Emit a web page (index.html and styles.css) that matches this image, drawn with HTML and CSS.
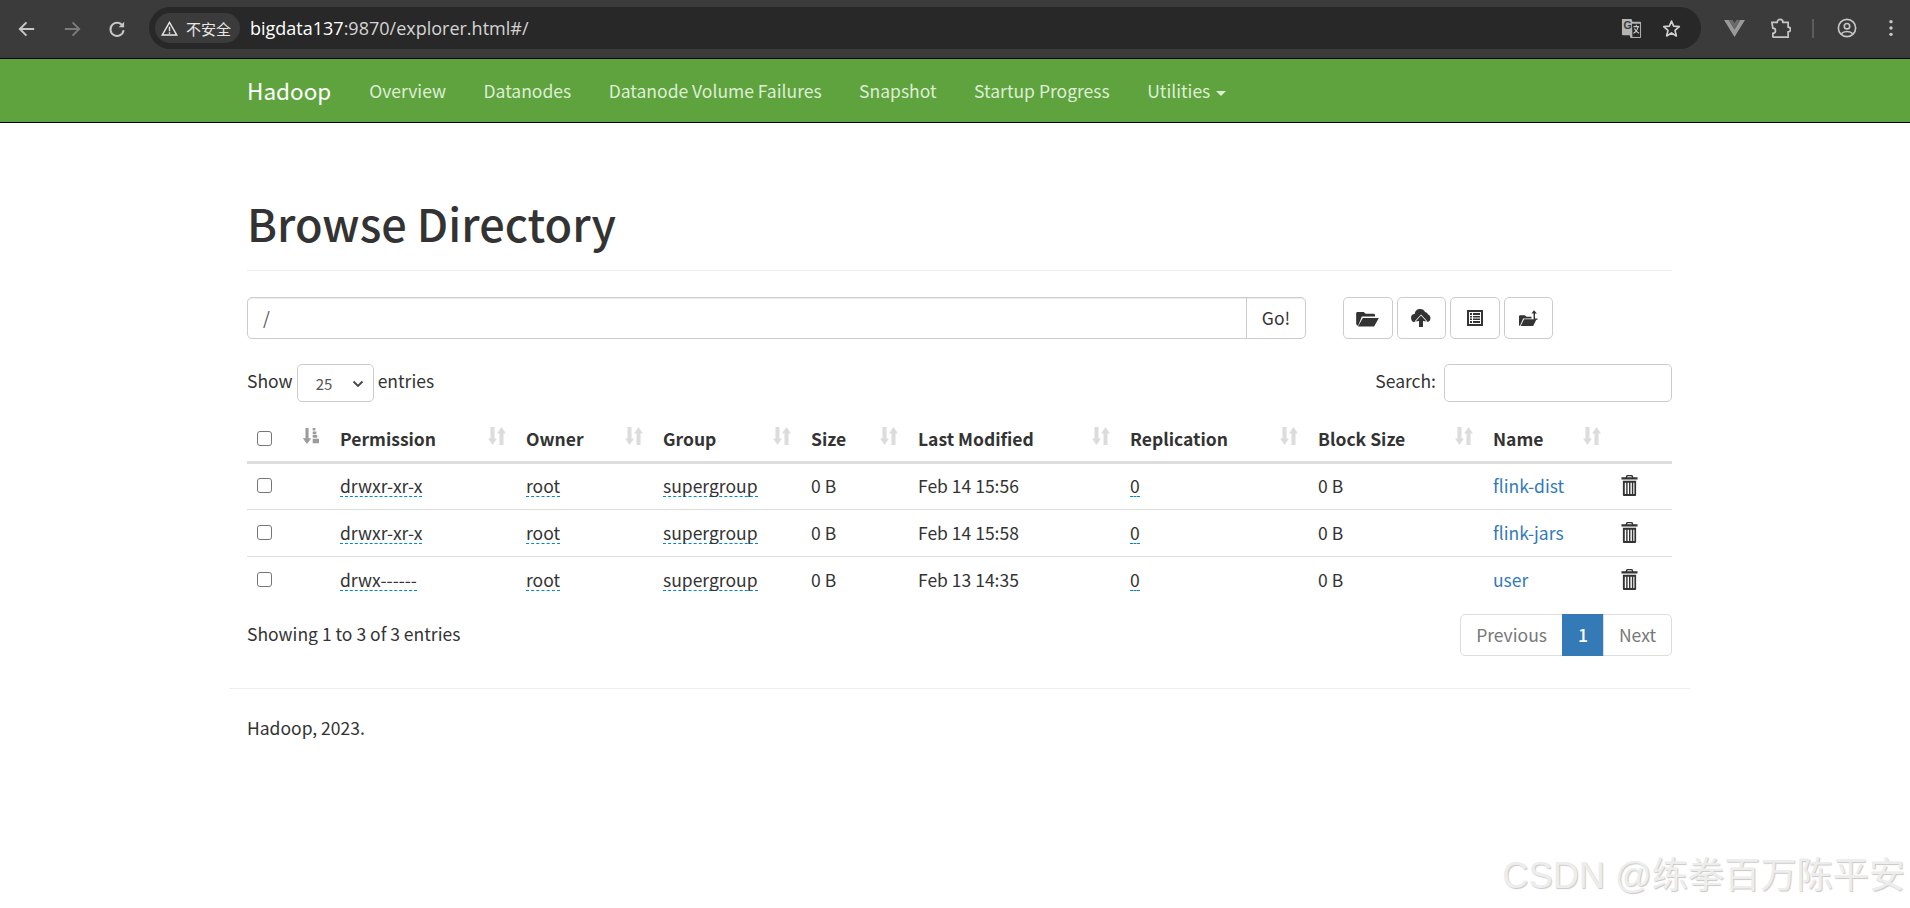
FILE: index.html
```html
<!DOCTYPE html>
<html lang="en">
<head>
<meta charset="utf-8">
<title>Browsing HDFS</title>
<link rel="stylesheet" href="styles.css">
</head>
<body>
<svg class="defs" width="0" height="0" aria-hidden="true">
  <defs>
    <symbol id="sort" viewBox="0 0 18 18">
      <path d="M2.500 0h4v11.500h2.500L4.500 18 0 11.500h2.500z"/>
      <path d="M13.500 0 18 6.500h-2.500V18h-4V6.500H9z"/>
    </symbol>
    <symbol id="trash" viewBox="0 0 18 22">
      <path fill-rule="evenodd" d="M6 0h6l1.200 2.300H17.500v2.400H.5V2.300h4.300zM7 1.300 6.500 2.300h5L11 1.300zM2 6h14v15a1 1 0 0 1-1 1H3a1 1 0 0 1-1-1zM4 8v12h1.500V8zM7 8v12h1.500V8zM10 8v12h1.500V8zM13 8v12h1.200V8z"/>
    </symbol>
  </defs>
</svg>
<header class="chrome">
  <div class="nav-buttons">
    <svg class="ci" viewBox="0 0 20 20"><path d="M16.500 10H4M9.500 4 3.500 10l6 6" class="st-light"/></svg>
    <svg class="ci" viewBox="0 0 20 20"><path d="M3.500 10H16M10.500 4l6 6-6 6" class="st-dim"/></svg>
    <svg class="ci" viewBox="0 0 20 20"><path d="M15.600 8A6 6 0 1 0 16 11" class="st-light"/><path d="M16.500 3.500v5h-5z" class="fill-light"/></svg>
  </div>
  <div class="omnibox">
    <div class="security">
      <svg class="warn" viewBox="0 0 18 16"><path d="M9 1.500 1.200 15h15.600zM9 6v5M9 12v1.500" class="st-white"/></svg>
      <span>不安全</span>
    </div>
    <div class="url"><span class="host">bigdata137</span><span class="path">:9870/explorer.html#/</span></div>
    <svg class="translate" viewBox="0 0 22 22"><path d="M1 1h10l1 3h8a1 1 0 0 1 1 1v15a1 1 0 0 1-1 1H10l-1-3H2a1 1 0 0 1-1-1z" class="fill-grey"/><path d="M11.500 6H20v14h-8z" fill="#2a2a2a"/><path d="M13 9h6M16 7v2M18 9c-1 4-3 6-5 7M14 11c1 2 3 4 5 5" class="st-thin"/><text x="2.500" y="12" class="g">G</text></svg>
    <svg class="star" viewBox="0 0 20 20"><path d="M10 2.200 12.300 7.600 18.200 8.100 13.700 12 15.100 17.800 10 14.700 4.900 17.800 6.300 12 1.800 8.100 7.700 7.600z" class="st-star"/></svg>
  </div>
  <div class="tools">
    <svg class="vue" viewBox="0 0 22 20"><path d="M0 1h5l6 10 6-10h5L11 19z" fill="#9a9a9a"/><path d="M5 1h4l2 3.500L13 1h4l-6 10z" fill="#6a6a6a"/></svg>
    <svg class="puzzle" viewBox="0 0 22 22"><path d="M2 4.500h5.500a3 3 0 0 1 6 0H19v5a2.500 2.500 0 0 1 0 5V20H3.500l-.5-.5v-3.500a2.500 2.500 0 0 0 0-5.500z" class="st-light"/></svg>
    <span class="divider"></span>
    <svg class="profile" viewBox="0 0 22 22"><circle cx="11" cy="11" r="9.500" class="st-light"/><circle cx="11" cy="9" r="3" class="st-light"/><path d="M4.500 17.500c3-3.500 10-3.500 13 0" class="st-light"/></svg>
    <svg class="menu" viewBox="0 0 6 22"><circle cx="3" cy="4" r="1.900"/><circle cx="3" cy="11" r="1.900"/><circle cx="3" cy="18" r="1.900"/></svg>
  </div>
</header>
<nav class="navbar">
  <div class="nav-inner">
    <a class="brand">Hadoop</a>
    <a class="nav-link">Overview</a>
    <a class="nav-link">Datanodes</a>
    <a class="nav-link">Datanode Volume Failures</a>
    <a class="nav-link">Snapshot</a>
    <a class="nav-link">Startup Progress</a>
    <a class="nav-link">Utilities <b class="caret"></b></a>
  </div>
</nav>
<main class="container">
  <div class="page-header"><h1>Browse Directory</h1></div>
  <div class="path-row">
    <div class="input-group">
      <div class="path-input">/</div>
      <div class="go">Go!</div>
    </div>
    <div class="actions">
      <button class="btn"><svg class="folder" viewBox="0 0 24 18"><path d="M2 17 0 15V3l1-1h7l2 2h9l1 1v2H6zM7 8.500h17L19 17.500H2z"/></svg></button>
      <button class="btn"><svg class="cloud" viewBox="0 0 20 20"><path d="M4.500 14a4 4 0 0 1-.8-8 5.500 5.500 0 0 1 10.400-2 3.500 3.500 0 0 1 2.800 2.300A4 4 0 0 1 16 14z"/><path d="M10 7.500l5 5.500h-3v6H8v-6H5z" class="arrow"/></svg></button>
      <button class="btn"><svg class="list" viewBox="0 0 18 18"><path fill-rule="evenodd" d="M1 1h16v16H1zM3 3v12h12V3zM4 4h2v2H4zM7 4h7v2H7zM4 7h2v1.500H4zM7 7h7v1.500H7zM4 9.500h2V11H4zM7 9.500h7V11H7zM4 12h2v2H4zM7 12h7v2H7z"/></svg></button>
      <button class="btn"><svg class="folder-up" viewBox="0 0 24 20"><path d="M1 19 0 18V7l1-1h6l2 2h6v2H5zM6 11h15l-4 8H2z"/><path d="M18 0l3.500 4h-2.300v6h3v1.500h-4.700V4h-2.500z"/></svg></button>
    </div>
  </div>
  <div class="table-tools">
    <label class="length">Show <span class="select"><span>25</span><svg class="chev" viewBox="0 0 12 8"><path d="M1.500 1.500 6 6l4.500-4.500"/></svg></span> entries</label>
    <label class="search">Search: <span class="search-box"></span></label>
  </div>
  <table class="files">
    <colgroup>
      <col class="c1"><col class="c2"><col class="c3"><col class="c4"><col class="c5"><col class="c6"><col class="c7"><col class="c8"><col class="c9"><col class="c10"><col class="c11">
    </colgroup>
    <thead>
      <tr>
        <th><span class="check"></span></th>
        <th><svg class="sort-active" viewBox="0 0 20 20"><path d="M5 1h3.400v11.500h3L6.700 19 2 12.500h3z"/><path d="M13 1h3v3h-3zM13 5h4v3h-4zM13 9h5v3h-5zM13 13h7v5h-7z"/></svg></th>
        <th><div class="th"><span>Permission</span><svg class="sort"><use href="#sort"/></svg></div></th>
        <th><div class="th"><span>Owner</span><svg class="sort"><use href="#sort"/></svg></div></th>
        <th><div class="th"><span>Group</span><svg class="sort"><use href="#sort"/></svg></div></th>
        <th><div class="th"><span>Size</span><svg class="sort"><use href="#sort"/></svg></div></th>
        <th><div class="th"><span>Last Modified</span><svg class="sort"><use href="#sort"/></svg></div></th>
        <th><div class="th"><span>Replication</span><svg class="sort"><use href="#sort"/></svg></div></th>
        <th><div class="th"><span>Block Size</span><svg class="sort"><use href="#sort"/></svg></div></th>
        <th><div class="th"><span>Name</span><svg class="sort"><use href="#sort"/></svg></div></th>
        <th></th>
      </tr>
    </thead>
    <tbody>
      <tr>
        <td><span class="check"></span></td><td></td>
        <td><span class="edit">drwxr-xr-x</span></td><td><span class="edit">root</span></td><td><span class="edit">supergroup</span></td>
        <td>0 B</td><td>Feb 14 15:56</td><td><span class="edit">0</span></td><td>0 B</td>
        <td><a class="link">flink-dist</a></td><td><svg class="trash"><use href="#trash"/></svg></td>
      </tr>
      <tr>
        <td><span class="check"></span></td><td></td>
        <td><span class="edit">drwxr-xr-x</span></td><td><span class="edit">root</span></td><td><span class="edit">supergroup</span></td>
        <td>0 B</td><td>Feb 14 15:58</td><td><span class="edit">0</span></td><td>0 B</td>
        <td><a class="link">flink-jars</a></td><td><svg class="trash"><use href="#trash"/></svg></td>
      </tr>
      <tr>
        <td><span class="check"></span></td><td></td>
        <td><span class="edit">drwx------</span></td><td><span class="edit">root</span></td><td><span class="edit">supergroup</span></td>
        <td>0 B</td><td>Feb 13 14:35</td><td><span class="edit">0</span></td><td>0 B</td>
        <td><a class="link">user</a></td><td><svg class="trash"><use href="#trash"/></svg></td>
      </tr>
    </tbody>
  </table>
  <div class="table-foot">
    <div class="showing">Showing 1 to 3 of 3 entries</div>
    <div class="pager"><span class="pg first">Previous</span><span class="pg current">1</span><span class="pg last">Next</span></div>
  </div>
  <div class="rule"></div>
  <footer class="footer">Hadoop, 2023.</footer>
</main>
<div class="watermark">CSDN @练拳百万陈平安</div>
</body>
</html>
```
FILE: styles.css
```css
* { box-sizing: border-box; }
html, body { margin: 0; height: 100%; }
body {
  background: #fff;
  color: #333;
  font-family: "Noto Sans CJK SC", "Noto Sans", sans-serif;
  font-size: 17.5px;
  line-height: 25px;
  overflow: hidden;
}
.defs { display: block; height: 0; }

/* browser chrome */
.chrome {
  height: 59px;
  background: #3b3b3b;
  border-bottom: 1px solid #000;
  display: flex;
  align-items: center;
  padding: 0 0 0 16px;
}
.nav-buttons { display: flex; gap: 23px; width: 133px; }
.ci { width: 22px; height: 22px; fill: none; }
.st-light { fill: none; stroke: #c7c7c7; stroke-width: 1.800; }
.st-dim { fill: none; stroke: #7a7a7a; stroke-width: 1.800; }
.fill-light { fill: #c7c7c7; }
.st-white { fill: none; stroke: #e8e8e8; stroke-width: 1.500; }
.fill-grey { fill: #b4b4b4; }
.st-thin { fill: none; stroke: #c7c7c7; stroke-width: 1.200; }
.g { font-size: 11px; font-weight: 700; fill: #3b3b3b; font-family: "Liberation Sans", sans-serif; }
.st-star { fill: none; stroke: #d0d0d0; stroke-width: 1.800; stroke-linejoin: round; }
.omnibox {
  width: 1552px;
  height: 42px;
  margin-top: -2px;
  background: #282828;
  border-radius: 21px;
  display: flex;
  align-items: center;
  padding: 0 20px 0 6px;
}
.security {
  height: 30px;
  width: 85px;
  flex: none;
  background: #3b3b3b;
  border-radius: 15px;
  display: flex;
  align-items: center;
  gap: 8px;
  padding-left: 6px;
  color: #e6e6e6;
  font-size: 15px;
  font-family: "Noto Sans CJK SC", sans-serif;
  white-space: nowrap;
}
.warn { width: 17px; height: 15px; flex: none; }
.url {
  flex: 1;
  margin-left: 10px;
  padding-top: 1px;
  font-family: "Open Sans", "Noto Sans", sans-serif;
  font-size: 18px;
}
.host { color: #fff; }
.path { color: #d4d4d4; }
.translate { width: 21px; height: 21px; margin-right: 20px; }
.star { width: 19px; height: 19px; }
.tools { display: flex; align-items: center; margin-left: 23px; margin-top: -2px; }
.vue { width: 21px; height: 19px; margin-right: 25px; }
.puzzle { width: 21px; height: 21px; margin-right: 21px; }
.divider { width: 2px; height: 19px; background: #5c5c5c; margin-right: 23px; }
.profile { width: 20px; height: 20px; margin-right: 31px; }
.menu { width: 6px; height: 20px; fill: #c7c7c7; }

/* navbar */
.navbar {
  height: 64px;
  background: #5fa33e;
  border-bottom: 1px solid #000;
}
.nav-inner {
  width: 1425px;
  margin-left: 247px;
  height: 63px;
  display: flex;
  align-items: center;
}
.brand { color: #fff; font-size: 22.500px; margin-right: 38px; }
.nav-link { color: #ddeed5; margin-right: 37.500px; white-space: nowrap; }
.caret {
  display: inline-block;
  margin-left: 2px;
  vertical-align: middle;
  border-top: 5px solid #ddeed5;
  border-left: 5px solid transparent;
  border-right: 5px solid transparent;
}

/* page */
.container { width: 1425px; margin-left: 247px; }
.page-header { margin-top: 50px; height: 98px; border-bottom: 1px solid #eee; }
h1 { margin: 0; padding-top: 25px; font-size: 45px; line-height: 50px; font-weight: 500; color: #333; }
.path-row { display: flex; margin-top: 26px; height: 42px; }
.input-group { width: 1059px; display: flex; border: 1px solid #ccc; border-radius: 5px; box-shadow: inset 0 1px 1px rgba(0,0,0,.075); }
.path-input { flex: 1; padding: 8px 15px; line-height: 24px; color: #555; }
.go { width: 59px; border-left: 1px solid #ccc; text-align: center; line-height: 40px; }
.actions { display: flex; gap: 4px; margin-left: 37px; }
.btn {
  width: 49.600px;
  height: 42px;
  padding: 0;
  background: #fff;
  border: 1px solid #ccc;
  border-radius: 5px;
  display: flex;
  align-items: center;
  justify-content: center;
}
.btn svg { fill: #333; }
.folder { width: 23px; height: 17px; }
.cloud { width: 20px; height: 20px; }
.arrow { stroke: #fff; stroke-width: 1.500px; paint-order: stroke; }
.list { width: 18px; height: 18px; }
.folder-up { width: 20px; height: 17px; }
.table-tools { display: flex; justify-content: space-between; margin-top: 25px; height: 38px; }
.length, .search { display: flex; align-items: flex-start; gap: 4px; line-height: 33px; }
.select {
  width: 77px;
  height: 38px;
  border: 1px solid #ccc;
  border-radius: 5px;
  display: flex;
  align-items: center;
  justify-content: space-between;
  padding: 1px 9px 0 18px;
  font-size: 15px;
  color: #555;
}
.chev { width: 12px; height: 8px; fill: none; stroke: #444; stroke-width: 1.800; }
.search { gap: 8px; }
.search-box { width: 228px; height: 38px; border: 1px solid #ccc; border-radius: 5px; }
.files { width: 1425px; table-layout: fixed; border-collapse: collapse; margin-top: 10px; }
.c1 { width: 54px; } .c2 { width: 39px; } .c3 { width: 186px; } .c4 { width: 137px; } .c5 { width: 148px; }
.c6 { width: 107px; } .c7 { width: 212px; } .c8 { width: 188px; } .c9 { width: 175px; } .c10 { width: 128px; } .c11 { width: 51px; }
th { height: 50px; border-bottom: 3px solid #ddd; padding: 5px 20px 0 0; text-align: left; font-weight: 700; }
td { height: 47px; border-bottom: 1px solid #ddd; padding: 0 0 1px; }
tbody tr:last-child td { border-bottom: 0; }
th:first-child, td:first-child { padding-left: 10px; }
.th { display: flex; justify-content: space-between; align-items: center; }
.sort { width: 18px; height: 18px; fill: #dcdcdc; flex: none; margin-top: -5px; }
.sort-active { width: 18px; height: 18px; fill: #9b9b9b; display: block; margin-top: -5px; }
.check { display: block; width: 15px; height: 15px; border: 1px solid #767676; border-radius: 3px; background: #fff; }
.edit { border-bottom: 1px dashed #08c; display: inline-block; line-height: 21px; }
.link { color: #337ab7; }
.trash { width: 17px; height: 21px; fill: #333; display: block; }
.table-foot { display: flex; justify-content: space-between; align-items: center; margin-top: 11px; }
.showing { padding-bottom: 4px; }
.pager { display: flex; height: 42px; }
.pg { padding: 0 15px; line-height: 40px; border: 1px solid #ddd; color: #777; margin-left: -1px; }
.first { border-radius: 5px 0 0 5px; }
.last { border-radius: 0 5px 5px 0; }
.current { background: #337ab7; border-color: #337ab7; color: #fff; font-weight: 500; }
.rule { margin: 32px -18px 0; border-top: 1px solid #eee; }
.footer { margin-top: 26px; }
.watermark {
  position: absolute;
  right: 5px;
  bottom: 8px;
  font-family: "Liberation Sans", "Noto Sans CJK SC", sans-serif;
  font-size: 36.200px;
  line-height: 48px;
  color: #ededed;
  text-shadow: 1px 1px 1px #c8c8c8;
}
```
